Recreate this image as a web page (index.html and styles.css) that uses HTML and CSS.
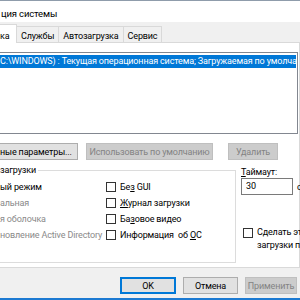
FILE: index.html
```html
<!DOCTYPE html>
<html lang="ru">
<head>
    <meta charset="UTF-8">
    <title>Конфигурация системы</title>
    <link rel="stylesheet" href="styles.css">
</head>
<body>
    <div class="window">
        <div class="titlebar">
            <span class="lead"><span>Конфигура</span></span>ция системы
        </div>

        <div class="tabs">
            <div class="tab active"><span class="lead"><span>Загруз</span></span>ка</div>
            <div class="tab">Службы</div>
            <div class="tab">Автозагрузка</div>
            <div class="tab">Сервис</div>
        </div>

        <div class="panel">
            <div class="boot-list">
                <div class="boot-item selected"><span class="lead"><span>Windows 10 (</span></span>C:\WINDOWS) : Текущая операционная система; Загружаемая по умолчанию ОС</div>
            </div>

            <div class="list-buttons">
                <button class="btn btn-advanced"><span class="lead"><span>Дополнитель</span></span>ные параметры...</button>
                <button class="btn btn-default-os" disabled>Использовать по умолчанию</button>
                <button class="btn btn-delete" disabled>Удалить</button>
            </div>

            <div class="options-row">
                <fieldset class="boot-options">
                    <legend><span class="lead"><span>Параметры </span></span>загрузки</legend>
                    <div class="options-cols">
                        <div class="col-left">
                            <div class="opt-text"><span class="lead"><span>Безопасн</span></span>ый режим</div>
                            <div class="opt-text off"><span class="lead"><span>Миним</span></span>альная</div>
                            <div class="opt-text off"><span class="lead"><span>Друга</span></span>я оболочка</div>
                            <div class="opt-text off"><span class="lead"><span>Восста</span></span>новление Active Directory</div>
                        </div>
                        <div class="col-right">
                            <label class="check"><span class="box"></span><span>Бе<u>з</u> GUI</span></label>
                            <label class="check"><span class="box"></span><span><u>Ж</u>урнал загрузки</span></label>
                            <label class="check"><span class="box"></span><span>Ба<u>з</u>овое видео</span></label>
                            <label class="check"><span class="box"></span><span>Информация&nbsp; об <u>О</u>С</span></label>
                        </div>
                    </div>
                </fieldset>

                <div class="side">
                    <div class="timeout-label"><u>Т</u>аймаут:</div>
                    <div class="timeout-row">
                        <div class="timeout-input">30</div>
                        <span class="unit">сек.</span>
                    </div>
                    <label class="check permanent"><span class="box"></span><span class="permanent-text">Сделать эти параметры<br>загрузки постоянными</span></label>
                </div>
            </div>
        </div>

        <div class="footer">
            <button class="btn btn-ok">OK</button>
            <button class="btn btn-cancel">Отмена</button>
            <button class="btn btn-apply" disabled>Применить</button>
        </div>
    </div>
</body>
</html>
```

FILE: styles.css
```css
body {
    margin: 0;
    width: 300px;
    height: 300px;
    overflow: hidden;
    font-family: Roboto, "Noto Sans", sans-serif;
    font-size: 9px;
    letter-spacing: -0.15px;
    color: #000;
    background-color: #f0f0f0;
}
.window {
    height: 300px;
    box-sizing: border-box;
    border-top: 1px solid #8f9cab;
    border-bottom: 2px solid #1c7ad2;
    display: flex;
    flex-direction: column;
    overflow: hidden;
}
/* hidden start of a text that the crop cuts off on the left */
.lead {
    display: inline-flex;
    width: 0;
    justify-content: flex-end;
    white-space: nowrap;
}
.lead > span {
    flex-shrink: 0;
    visibility: hidden;
}
.titlebar {
    height: 21px;
    box-sizing: border-box;
    padding: 3px 0 0 1px;
    background-color: #fff;
    display: flex;
    align-items: center;
    white-space: nowrap;
    font-size: 9.5px;
}
.tabs {
    height: 20px;
    display: flex;
    align-items: flex-end;
    border-bottom: 1px solid #d9d9d9;
    white-space: nowrap;
}
.tab {
    height: 16px;
    line-height: 14px;
    padding: 2px 4px 0;
    box-sizing: border-box;
    border: 1px solid #d9d9d9;
    border-bottom: none;
    margin-left: -1px;
    background-color: #f0f0f0;
}
.tab.active {
    width: 17px;
    height: 19px;
    padding: 4px 0 0;
    margin-bottom: -1px;
    margin-left: 0;
    border-left: none;
    background-color: #fff;
    position: relative;
    z-index: 1;
}
.panel {
    flex: 1;
    background-color: #fff;
    border-right: 1px solid #d9d9d9;
    border-bottom: 1px solid #d9d9d9;
    padding: 9px 0 4px;
    display: flex;
    flex-direction: column;
}
.boot-list {
    height: 82px;
    box-sizing: border-box;
    margin-right: 1px;
    border: 1px solid #828790;
    border-left: none;
    padding: 2px 1px 2px 0;
    white-space: nowrap;
    overflow: hidden;
}
.boot-item {
    height: 13px;
    line-height: 13px;
    overflow: hidden;
}
.boot-item.selected {
    background-color: #0078d7;
    color: #fff;
}
.list-buttons {
    display: flex;
    margin-top: 9px;
    height: 17px;
}
.btn {
    font-family: inherit;
    font-size: 9px;
    letter-spacing: -0.15px;
    height: 17px;
    padding: 0 3px;
    flex-shrink: 0;
    box-sizing: border-box;
    border: 1px solid #adadad;
    background-color: #e1e1e1;
    color: #000;
    white-space: nowrap;
    overflow: hidden;
    display: inline-flex;
    align-items: center;
    justify-content: center;
}
.btn:disabled {
    border-color: #bfbfbf;
    background-color: #cccccc;
    color: #838383;
}
.btn-advanced {
    width: 78px;
    border-left: none;
    justify-content: flex-start;
    padding-left: 0;
}
.btn-default-os {
    width: 127px;
    margin-left: 8px;
}
.btn-delete {
    width: 50px;
    margin-left: 15px;
}
.options-row {
    display: flex;
    margin-top: 4px;
    flex: 1;
}
.boot-options {
    width: 236px;
    flex-shrink: 0;
    box-sizing: border-box;
    margin: 0;
    padding: 0;
    border: 1px solid #dcdcdc;
    border-left: none;
    min-width: 0;
}
.boot-options legend {
    padding: 0 2px 0 0;
    white-space: nowrap;
    line-height: 12px;
}
.options-cols {
    display: flex;
    margin-top: 3px;
}
.col-left {
    width: 106px;
    white-space: nowrap;
    overflow: hidden;
}
.opt-text {
    height: 16px;
    line-height: 16px;
}
.opt-text.off {
    color: #8a8a8a;
}
.col-right {
    display: flex;
    flex-direction: column;
}
.check {
    display: flex;
    align-items: center;
    height: 16px;
    white-space: nowrap;
}
.box {
    width: 10px;
    height: 10px;
    box-sizing: border-box;
    border: 1px solid #333;
    background-color: #fff;
    margin-right: 4px;
    flex-shrink: 0;
}
.side {
    min-width: 0;
    padding-left: 5px;
    display: flex;
    flex-direction: column;
    white-space: nowrap;
}
.timeout-label {
    line-height: 12px;
    margin-top: 2px;
}
.timeout-row {
    display: flex;
    align-items: center;
}
.timeout-input {
    width: 52px;
    height: 17px;
    flex-shrink: 0;
    box-sizing: border-box;
    border: 1px solid #7a7a7a;
    padding-left: 4px;
    line-height: 15px;
    background-color: #fff;
}
.unit {
    margin-left: 4px;
}
.permanent {
    margin-top: 31px;
    align-items: flex-start;
    height: auto;
    padding-left: 2px;
}
.permanent .box {
    margin-top: 2px;
}
.permanent-text {
    line-height: 13px;
}
.footer {
    height: 30px;
    display: flex;
    justify-content: flex-end;
    align-items: flex-start;
    gap: 7px;
    padding: 9px 3px 0 0;
    box-sizing: border-box;
}
.btn-ok {
    width: 56px;
    border-color: #0078d7;
    box-shadow: inset 0 0 0 1px #0078d7;
}
.btn-cancel {
    width: 55px;
}
.btn-apply {
    width: 52px;
}
```
